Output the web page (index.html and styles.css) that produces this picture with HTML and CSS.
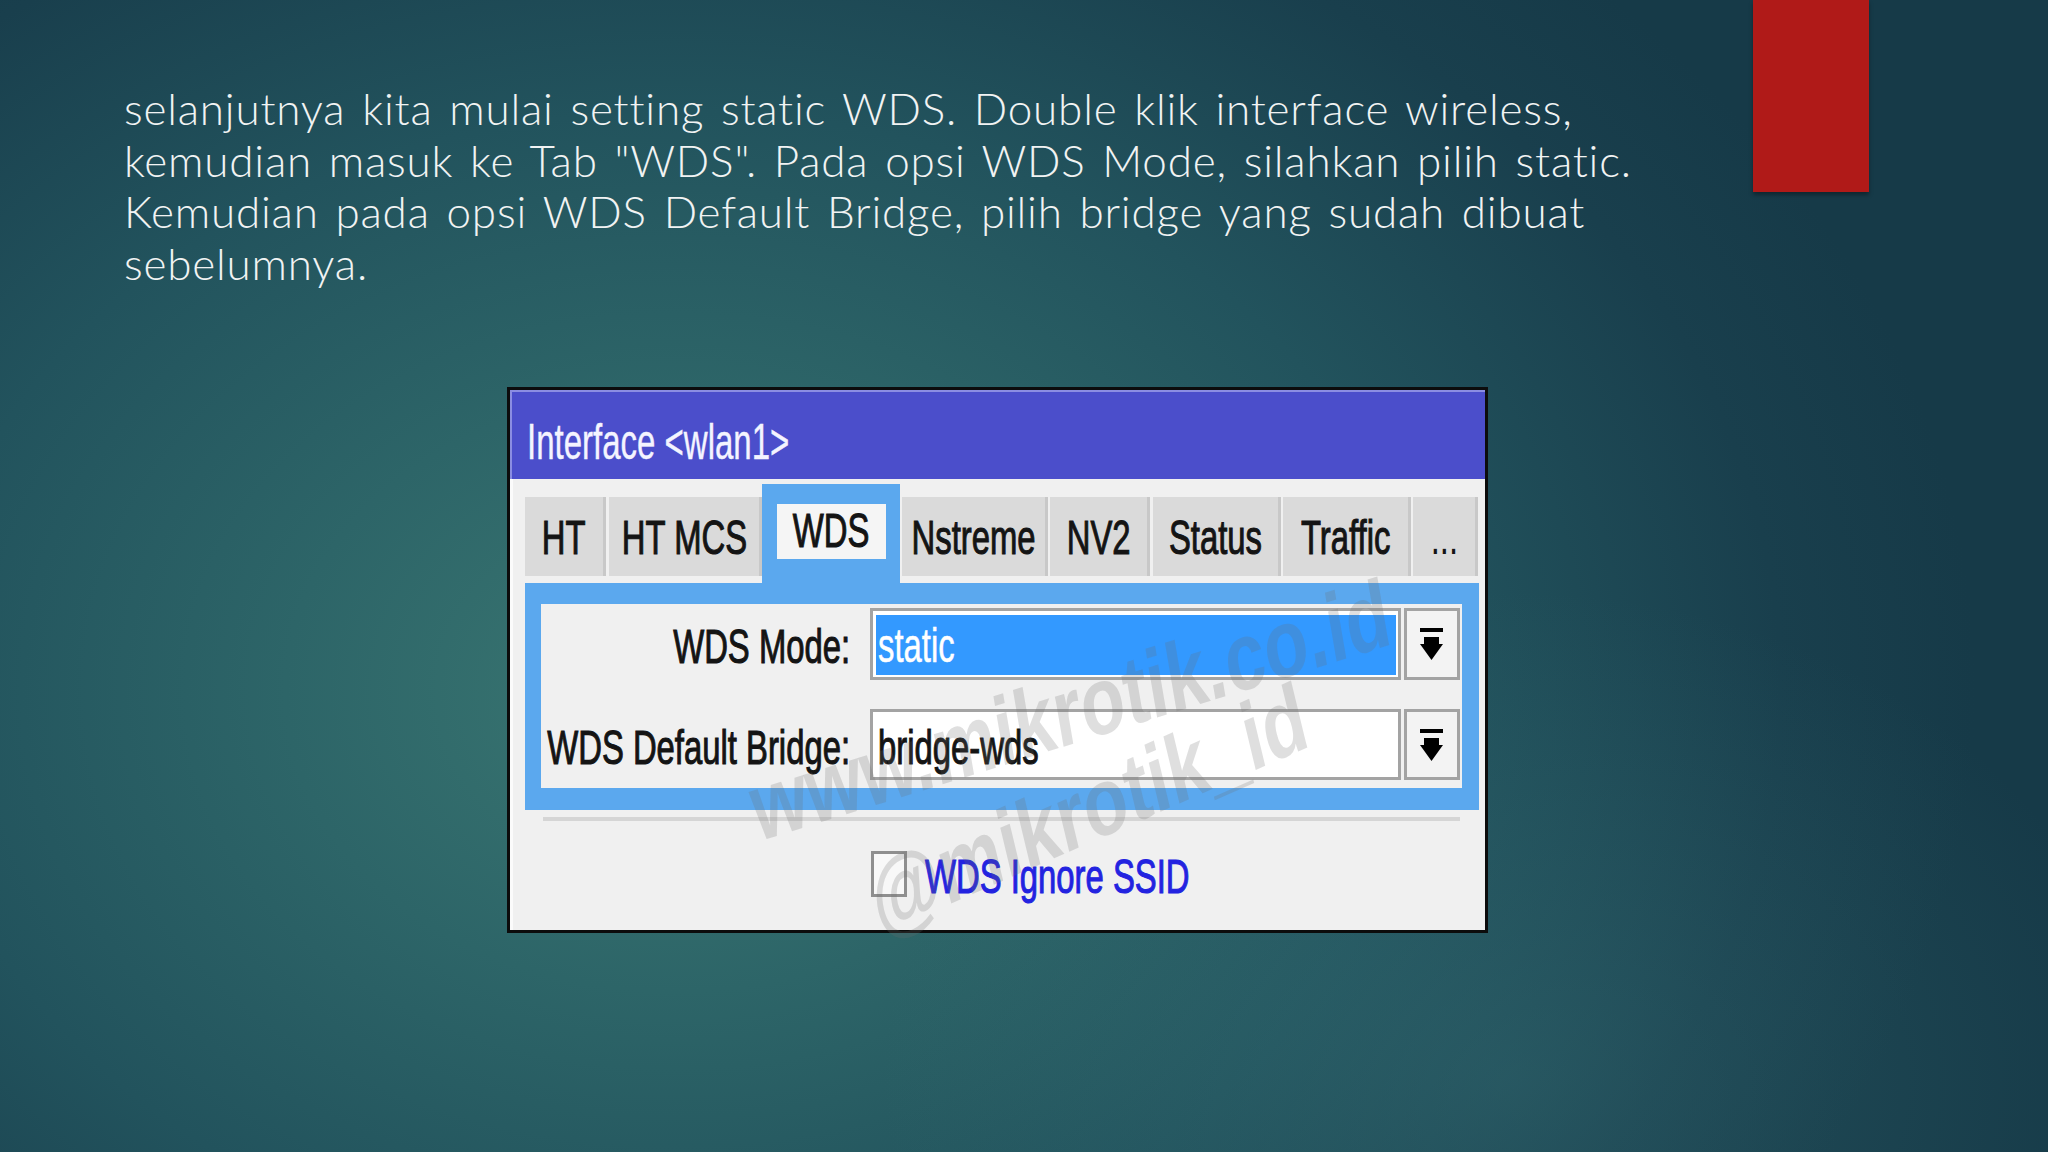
FILE: index.html
```html
<!DOCTYPE html>
<html lang="id">
<head>
<meta charset="utf-8">
<title>WDS</title>
<link rel="stylesheet" href="styles.css">
</head>
<body>
<div class="slide">
  <header class="slide-head">
    <p class="slide-text">selanjutnya kita mulai setting static WDS. Double klik interface wireless,<br>kemudian masuk ke Tab "WDS". Pada opsi WDS Mode, silahkan pilih static.<br>Kemudian pada opsi WDS Default Bridge, pilih bridge yang sudah dibuat<br>sebelumnya.</p>
    <div class="accent"></div>
  </header>

  <section class="window">
    <div class="titlebar"><span class="t">Interface &lt;wlan1&gt;</span></div>
    <div class="win-body">
      <div class="tabs">
        <div class="tab tab-ht"><span class="t c">HT</span></div>
        <div class="tab tab-htmcs"><span class="t c">HT MCS</span></div>
        <div class="tab-active"><div class="tab-inner"><span class="t c">WDS</span></div></div>
        <div class="tab tab-nstreme"><span class="t c">Nstreme</span></div>
        <div class="tab tab-nv2"><span class="t c">NV2</span></div>
        <div class="tab tab-status"><span class="t c">Status</span></div>
        <div class="tab tab-traffic"><span class="t c">Traffic</span></div>
        <div class="tab tab-more"><span class="t c">...</span></div>
      </div>

      <div class="panel">
        <div class="panel-inner">
          <div class="row row-1">
            <div class="label"><span class="t r">WDS Mode:</span></div>
            <div class="field field-selected"><div class="field-fill"><span class="t">static</span></div></div>
            <div class="drop">
              <svg width="24" height="33" viewBox="0 0 24 33"><path d="M0 0H23V4H0Z M4 9H19V16H23L11.5 32L0 16H4Z" fill="#000"/></svg>
            </div>
          </div>
          <div class="row row-2">
            <div class="label"><span class="t r">WDS Default Bridge:</span></div>
            <div class="field"><div class="field-fill plain"><span class="t">bridge-wds</span></div></div>
            <div class="drop">
              <svg width="24" height="33" viewBox="0 0 24 33"><path d="M0 0H23V4H0Z M4 9H19V16H23L11.5 32L0 16H4Z" fill="#000"/></svg>
            </div>
          </div>
        </div>
      </div>

      <div class="sep"></div>

      <div class="check-row">
        <div class="checkbox"></div>
        <span class="t check-label">WDS Ignore SSID</span>
      </div>
    </div>

    <div class="watermark wm1">www.mikrotik.co.id</div>
    <div class="watermark wm2">@mikrotik_id</div>
  </section>
</div>
</body>
</html>
```

FILE: styles.css
```css
html, body {
  margin: 0;
  padding: 0;
}

body {
  width: 2048px;
  height: 1152px;
  overflow: hidden;
  background:
    radial-gradient(ellipse 900px 700px at 1510px 1080px, rgba(60,120,125,0.35), rgba(60,120,125,0) 70%),
    radial-gradient(ellipse 1300px 1000px at 33% 60%, #3a7772 0%, #2d6568 30%, #22535d 58%, #193f4d 85%, #163a48 100%);
  background-color: #1d4855;
}

.slide {
  width: 2048px;
  height: 1152px;
}

.slide-head {
  display: flex;
  align-items: flex-start;
  height: 387px;
  box-sizing: border-box;
}

.slide-text {
  margin: 0;
  padding: 83px 0 0 124px;
  font-family: "Lato", "Liberation Sans", sans-serif;
  font-weight: 300;
  font-size: 44px;
  line-height: 51.5px;
  letter-spacing: 0.8px;
  word-spacing: 4px;
  color: #f1f3f3;
  white-space: nowrap;
}

.accent {
  margin-left: auto;
  margin-right: 179px;
  width: 116px;
  height: 192px;
  background: #b01a18;
  box-shadow: 0 3px 4px rgba(0, 0, 0, 0.35);
}

/* ---------- Winbox window ---------- */
.window {
  position: relative;
  margin-left: 507px;
  width: 981px;
  height: 546px;
  box-sizing: border-box;
  border: 3px solid #0c0c0c;
  background: #f0f0f0;
}

.t {
  display: inline-block;
  white-space: nowrap;
  font-family: "Liberation Sans", Arial, sans-serif;
  font-weight: normal;
  font-size: 49px;
  color: #141414;
  -webkit-text-stroke: 1.1px currentColor;
  transform: scaleX(0.67);
  transform-origin: left center;
}

.t.c { transform-origin: center center; }
.t.r { transform-origin: right center; }

.titlebar {
  height: 89px;
  box-sizing: border-box;
  padding: 27px 0 0 17px;
  background: #4b4ecb;
  box-shadow: inset 2px 2px 0 #8b8de2;
}

.titlebar .t {
  font-size: 50px;
  line-height: 50px;
  color: #f4f4ff;
  -webkit-text-stroke: 0.4px currentColor;
  transform: scaleX(0.66);
}

.win-body {
  box-shadow: inset 3px 0 0 #fbfbfb;
  height: 451px;
}

.tabs {
  display: flex;
  align-items: flex-start;
  height: 104px;
  padding-left: 15px;
}

.tab {
  margin-top: 18px;
  height: 79px;
  box-sizing: border-box;
  padding-top: 2px;
  background: #dadada;
  display: flex;
  justify-content: center;
  box-shadow: 3px 0 0 #c8c8c8;
}

.tab .t { line-height: 77px; }

.tab-ht { width: 78px; }
.tab-htmcs { width: 150px; margin-left: 6px; }
.tab-nstreme { width: 143px; margin-left: 2px; }
.tab-nv2 { width: 97px; margin-left: 5px; }
.tab-status { width: 125px; margin-left: 6px; }
.tab-traffic { width: 125px; margin-left: 5px; }
.tab-more { width: 62px; margin-left: 5px; }

.tab-more .t { -webkit-text-stroke: 0; }

.tab-active {
  margin-top: 5px;
  margin-left: 3px;
  width: 138px;
  height: 99px;
  box-sizing: border-box;
  padding: 20px 0 0 15px;
  background: #5ba8ee;
}

.tab-inner {
  width: 109px;
  height: 55px;
  background: #f5f5f5;
  display: flex;
  justify-content: center;
}

.tab-inner .t { line-height: 52px; }

.panel {
  margin-left: 15px;
  width: 954px;
  box-sizing: border-box;
  padding: 21px 17px 22px 16px;
  background: #5ba8ee;
}

.panel-inner {
  background: #f0f0f0;
  padding: 4px 2px 8px 0;
  display: flex;
  flex-direction: column;
  gap: 29px;
}

.row {
  display: flex;
  height: 72px;
}

.row-2 { height: 71px; }

.label {
  width: 329px;
  box-sizing: border-box;
  padding: 4px 20px 0 0;
  display: flex;
  justify-content: flex-end;
  align-items: flex-start;
}

.label .t { line-height: 68px; }
.row-2 .label { padding-top: 6px; }
.row-2 .label .t { line-height: 65px; }

.field {
  width: 531px;
  box-sizing: border-box;
  border: 3px solid #a3a3a3;
  background: #ffffff;
  padding: 4px 2px 2px 3px;
}

.field-fill {
  height: 100%;
  background: #3399ff;
  padding: 2px 0 0 2px;
  box-sizing: border-box;
}

.field-fill.plain {
  background: transparent;
  padding-top: 4px;
}

.field-fill .t { line-height: 56px; }
.field-fill.plain .t { line-height: 55px; }
.field-selected .t { color: #ffffff; -webkit-text-stroke: 0.5px #ffffff; }

.drop {
  width: 56px;
  margin-left: 3px;
  box-sizing: border-box;
  border: 3px solid #a3a3a3;
  background: #f3f3f3;
  display: flex;
  justify-content: center;
  padding-top: 17px;
}

.sep {
  margin: 7px 0 0 33px;
  width: 917px;
  height: 4px;
  background: #d5d5d5;
}

.check-row {
  display: flex;
  align-items: flex-start;
  margin-top: 30px;
  padding-left: 361px;
}

.checkbox {
  width: 36px;
  height: 46px;
  box-sizing: border-box;
  border: 3px solid #8f8f8f;
  background: #f8f8f8;
}

.check-label {
  margin-left: 18px;
  line-height: 50px;
  color: #2323e0;
}

.watermark {
  position: absolute;
  font-family: "Liberation Sans", Arial, sans-serif;
  font-weight: bold;
  font-size: 72px;
  line-height: 72px;
  color: rgba(110, 110, 110, 0.22);
  white-space: nowrap;
  pointer-events: none;
}

.wm1 {
  left: 560px;
  top: 320px;
  transform: translate(-50%, -50%) scaleY(1.35) rotate(-13deg);
}

.wm2 {
  left: 578px;
  top: 418px;
  transform: translate(-50%, -50%) scaleY(1.35) rotate(-18deg);
}
```
